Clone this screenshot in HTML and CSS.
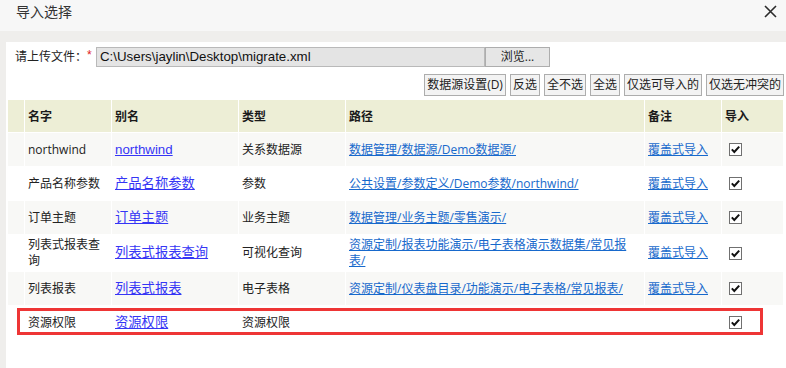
FILE: index.html
```html
<!DOCTYPE html>
<html lang="zh-CN">
<head>
<meta charset="utf-8">
<title>导入选择</title>
<link rel="stylesheet" href="styles.css">
</head>
<body>
<div class="dialog">
  <div class="titlebar">
    <span class="title">导入选择</span>
    <svg class="close" width="13" height="13" viewBox="0 0 13 13"><path d="M1 1 L12 12 M12 1 L1 12" stroke="#2b2b2b" stroke-width="1.6"/></svg>
  </div>
  <div class="panel">
    <div class="upload-row">
      <span class="label">请上传文件：</span><span class="req">*</span>
      <div class="file-input">C:\Users\jaylin\Desktop\migrate.xml</div>
      <div class="btn browse">浏览...</div>
    </div>
    <div class="toolbar">
      <div class="btn">数据源设置(D)</div>
      <div class="btn">反选</div>
      <div class="btn">全不选</div>
      <div class="btn">全选</div>
      <div class="btn">仅选可导入的</div>
      <div class="btn">仅选无冲突的</div>
    </div>
    <div class="table-wrap">
      <table class="grid">
        <colgroup>
          <col class="c0"><col class="c1"><col class="c2"><col class="c3"><col class="c4"><col class="c5"><col class="c6">
        </colgroup>
        <thead>
          <tr><th></th><th>名字</th><th>别名</th><th>类型</th><th>路径</th><th>备注</th><th>导入</th></tr>
        </thead>
        <tbody>
          <tr class="odd">
            <td></td><td>northwind</td><td><a class="alias">northwind</a></td><td>关系数据源</td>
            <td><a class="path">数据管理/数据源/Demo数据源/</a></td><td><a class="path">覆盖式导入</a></td>
            <td><svg class="chk" width="13" height="13" viewBox="0 0 13 13"><rect x="0.5" y="0.5" width="12" height="12" fill="#fff" stroke="#707070"/><path d="M2.8 6.4 L5.3 9 L10.2 3.6" fill="none" stroke="#111" stroke-width="2"/></svg></td>
          </tr>
          <tr>
            <td></td><td>产品名称参数</td><td><a class="alias">产品名称参数</a></td><td>参数</td>
            <td><a class="path">公共设置/参数定义/Demo参数/northwind/</a></td><td><a class="path">覆盖式导入</a></td>
            <td><svg class="chk" width="13" height="13" viewBox="0 0 13 13"><rect x="0.5" y="0.5" width="12" height="12" fill="#fff" stroke="#707070"/><path d="M2.8 6.4 L5.3 9 L10.2 3.6" fill="none" stroke="#111" stroke-width="2"/></svg></td>
          </tr>
          <tr class="odd">
            <td></td><td>订单主题</td><td><a class="alias">订单主题</a></td><td>业务主题</td>
            <td><a class="path">数据管理/业务主题/零售演示/</a></td><td><a class="path">覆盖式导入</a></td>
            <td><svg class="chk" width="13" height="13" viewBox="0 0 13 13"><rect x="0.5" y="0.5" width="12" height="12" fill="#fff" stroke="#707070"/><path d="M2.8 6.4 L5.3 9 L10.2 3.6" fill="none" stroke="#111" stroke-width="2"/></svg></td>
          </tr>
          <tr>
            <td></td><td>列表式报表查询</td><td><a class="alias">列表式报表查询</a></td><td>可视化查询</td>
            <td><a class="path">资源定制/报表功能演示/电子表格演示数据集/常见报表/</a></td><td><a class="path">覆盖式导入</a></td>
            <td><svg class="chk" width="13" height="13" viewBox="0 0 13 13"><rect x="0.5" y="0.5" width="12" height="12" fill="#fff" stroke="#707070"/><path d="M2.8 6.4 L5.3 9 L10.2 3.6" fill="none" stroke="#111" stroke-width="2"/></svg></td>
          </tr>
          <tr class="odd">
            <td></td><td>列表报表</td><td><a class="alias">列表式报表</a></td><td>电子表格</td>
            <td><a class="path">资源定制/仪表盘目录/功能演示/电子表格/常见报表/</a></td><td><a class="path">覆盖式导入</a></td>
            <td><svg class="chk" width="13" height="13" viewBox="0 0 13 13"><rect x="0.5" y="0.5" width="12" height="12" fill="#fff" stroke="#707070"/><path d="M2.8 6.4 L5.3 9 L10.2 3.6" fill="none" stroke="#111" stroke-width="2"/></svg></td>
          </tr>
          <tr>
            <td></td><td>资源权限</td><td><a class="alias">资源权限</a></td><td>资源权限</td>
            <td></td><td></td>
            <td><svg class="chk" width="13" height="13" viewBox="0 0 13 13"><rect x="0.5" y="0.5" width="12" height="12" fill="#fff" stroke="#707070"/><path d="M2.8 6.4 L5.3 9 L10.2 3.6" fill="none" stroke="#111" stroke-width="2"/></svg></td>
          </tr>
        </tbody>
      </table>
      <div class="highlight"></div>
    </div>
  </div>
</div>
</body>
</html>
```
FILE: styles.css
```css
* { box-sizing: border-box; }
html, body { margin: 0; padding: 0; }
body {
  background: #efeeec;
  font-family: "Open Sans", "Noto Sans CJK SC", sans-serif;
  font-size: 12px;
  color: #222;
  width: 786px;
  height: 368px;
  overflow: hidden;
}
.dialog { display: flex; flex-direction: column; height: 368px; }
.titlebar {
  height: 31px;
  background: #f7f7f7;
  display: flex;
  align-items: flex-start;
  justify-content: space-between;
  padding: 3px 9px 0 16px;
}
.title { font-size: 14px; line-height: 18px; color: #333; }
.close { margin-top: 2px; }
.panel {
  margin: 11px 0 0 6px;
  background: #fff;
  flex: 1;
  padding: 5px 2px 0 1px;
}
.upload-row {
  display: flex;
  align-items: center;
  height: 20px;
  padding-left: 8px;
}
.label { line-height: 20px; }
.req {
  color: #e02020;
  font-family: "Liberation Sans", sans-serif;
  font-size: 12px;
  line-height: 12px;
  width: 9px;
  margin-top: -4px;
}
.file-input {
  width: 389px;
  height: 20px;
  background: #e4e4e4;
  border: 1px solid #b9b9b9;
  font-family: "Liberation Sans", sans-serif;
  font-size: 13.3px;
  line-height: 18px;
  padding-left: 3px;
  color: #111;
}
.btn {
  height: 22px;
  line-height: 20px;
  border: 1px solid #adadad;
  background: #f3f3f3;
  padding: 0 2px;
  color: #222;
  white-space: nowrap;
}
.browse {
  width: 65px;
  height: 20px;
  line-height: 18px;
  text-align: center;
  background: #e6e6e6;
}
.toolbar {
  display: flex;
  justify-content: flex-end;
  gap: 4px;
  margin-top: 7px;
}
.table-wrap { position: relative; margin-top: 3px; }
.grid {
  table-layout: fixed;
  width: 777px;
  border-collapse: separate;
  border-spacing: 1px;
  background: #fff;
}
.c0 { width: 16px; }
.c1 { width: 86px; }
.c2 { width: 126px; }
.c3 { width: 106px; }
.c4 { width: 298px; }
.c5 { width: 76px; }
.c6 { width: 61px; }
.grid th {
  height: 32px;
  background: #edeed6;
  text-align: left;
  font-weight: bold;
  padding: 0 3px;
  color: #1a1a1a;
}
.grid tbody tr { height: 33px; }
.grid td {
  padding: 2px 3px;
  line-height: 16px;
  vertical-align: middle;
  word-wrap: break-word;
}
.grid tr.odd td { background: #f8f8f6; }
a { text-decoration: underline; cursor: pointer; }
a.alias {
  color: #3535f5;
  font-family: "Liberation Sans", "Noto Sans CJK SC", sans-serif;
  font-size: 13.3px;
}
a.path { color: #1769cc; }
.chk { display: block; margin-left: 4px; }
.highlight {
  position: absolute;
  left: 10px;
  top: 209px;
  width: 746px;
  height: 27px;
  border: 3px solid #ee3535;
  pointer-events: none;
}
```
